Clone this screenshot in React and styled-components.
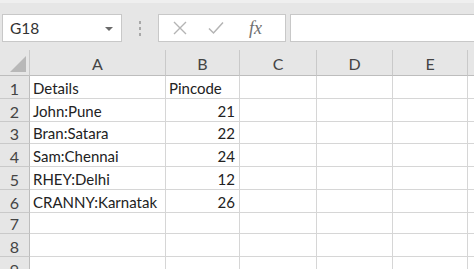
import React from "react";
import styled, { createGlobalStyle } from "styled-components";

const Global = createGlobalStyle`
  html, body { margin: 0; padding: 0; background: #ffffff; overflow: hidden; }
  * { box-sizing: border-box; }
`;

const Page = styled.div`
  width: 474px;
  height: 269px;
  overflow: hidden;
  font-family: Lato, "Liberation Sans", sans-serif;
  display: flex;
  flex-direction: column;
`;

const Toolbar = styled.div`
  height: 50px;
  flex-shrink: 0;
  background: linear-gradient(#efefef 0, #efefef 3px, #e6e6e6 3px);
  display: flex;
  align-items: flex-start;
  padding: 14px 0 0 2px;
`;

const NameBox = styled.div`
  width: 120px;
  height: 28px;
  background: #fff;
  border: 1px solid #c8c8c8;
  display: flex;
  align-items: center;
  justify-content: space-between;
  padding: 0 8px 0 7px;
  font-size: 15.5px;
  color: #333;
`;

const Caret = styled.span`
  width: 0;
  height: 0;
  border-left: 4px solid transparent;
  border-right: 4px solid transparent;
  border-top: 4px solid #6a6a6a;
  margin-top: 1px;
`;

const Grip = styled.div`
  width: 36px;
  height: 28px;
  display: flex;
  flex-direction: column;
  align-items: center;
  justify-content: center;
  gap: 3px;
`;

const Dot = styled.span`
  width: 2px;
  height: 3px;
  background: #a8a8a8;
`;

const FxBox = styled.div`
  width: 128px;
  height: 28px;
  background: #fff;
  border: 1px solid #c8c8c8;
  display: flex;
  align-items: center;
  padding-left: 12px;
`;

const FxButton = styled.span`
  width: ${(p) => p.$w}px;
  display: flex;
  align-items: center;
  justify-content: center;
`;

const FxLabel = styled.span`
  font-family: "Liberation Serif", "DejaVu Serif", serif;
  font-style: italic;
  font-size: 18px;
  color: #707070;
  margin-left: 6px;
`;

const FormulaInput = styled.div`
  flex: 1;
  height: 28px;
  margin-left: 4px;
  background: #fff;
  border: 1px solid #c8c8c8;
  border-right: none;
`;

const Grid = styled.div`
  flex-shrink: 0;
  display: grid;
  grid-template-columns: 30px 136px 74px 77px 76px 75px 1fr;
`;

const ColHead = styled.div`
  height: 26px;
  background: #e6e6e6;
  border-right: 1px solid ${(p) => (p.$last ? "#e6e6e6" : "#c9c9c9")};
  border-bottom: 1px solid #bdbdbd;
  display: flex;
  align-items: center;
  justify-content: center;
  font-size: 16px;
  color: #444;
  padding-top: 2px;
  position: relative;
`;

const CornerTri = styled.span`
  position: absolute;
  right: 3px;
  bottom: 3px;
  width: 0;
  height: 0;
  border-left: 16px solid transparent;
  border-bottom: 16px solid #b8b8b8;
`;

const RowHead = styled.div`
  height: ${(p) => p.$h}px;
  background: #e6e6e6;
  border-right: 1px solid #bdbdbd;
  border-bottom: 1px solid #c9c9c9;
  display: flex;
  align-items: flex-end;
  justify-content: center;
  padding-bottom: 0;
  font-size: 16px;
  color: #444;
`;

const Cell = styled.div`
  height: ${(p) => p.$h}px;
  border-right: 1px solid #d6d6d6;
  border-bottom: 1px solid #d6d6d6;
  display: flex;
  align-items: flex-end;
  justify-content: ${(p) => (p.$num ? "flex-end" : "flex-start")};
  padding: 0 4px 1px 3px;
  font-size: 15px;
  color: #222;
  white-space: nowrap;
  overflow: visible;
`;

const rows = [
  ["Details", "Pincode"],
  ["John:Pune", 21],
  ["Bran:Satara", 22],
  ["Sam:Chennai", 24],
  ["RHEY:Delhi", 12],
  ["CRANNY:Karnatak", 26],
  ["", ""],
  ["", ""],
  ["", ""],
];
const heights = [23, 23, 22, 23, 23, 23, 21, 23, 23];
const cols = ["A", "B", "C", "D", "E", ""];

function XIcon() {
  return (
    <svg width="14" height="14" viewBox="0 0 14 14">
      <path d="M1 1 L13 13 M13 1 L1 13" stroke="#b4b4b4" strokeWidth="1.4" fill="none" />
    </svg>
  );
}

function CheckIcon() {
  return (
    <svg width="16" height="14" viewBox="0 0 16 14">
      <path d="M1 7.5 L5.5 12 L15 1.5" stroke="#b4b4b4" strokeWidth="1.5" fill="none" />
    </svg>
  );
}

export default function App() {
  return (
    <Page>
      <Global />
      <Toolbar>
        <NameBox>
          <span>G18</span>
          <Caret />
        </NameBox>
        <Grip>
          <Dot />
          <Dot />
          <Dot />
        </Grip>
        <FxBox>
          <FxButton $w={18}>
            <XIcon />
          </FxButton>
          <FxButton $w={54}>
            <CheckIcon />
          </FxButton>
          <FxLabel>fx</FxLabel>
        </FxBox>
        <FormulaInput />
      </Toolbar>
      <Grid>
        <ColHead>
          <CornerTri />
        </ColHead>
        {cols.map((c, i) => (
          <ColHead key={i} $last={i === cols.length - 1}>
            {c}
          </ColHead>
        ))}
        {rows.map((r, i) => (
          <React.Fragment key={i}>
            <RowHead $h={heights[i]}>{i + 1}</RowHead>
            <Cell $h={heights[i]}>{r[0]}</Cell>
            <Cell $h={heights[i]} $num={typeof r[1] === "number"}>
              {r[1]}
            </Cell>
            <Cell $h={heights[i]} />
            <Cell $h={heights[i]} />
            <Cell $h={heights[i]} />
            <Cell $h={heights[i]} />
          </React.Fragment>
        ))}
      </Grid>
    </Page>
  );
}
